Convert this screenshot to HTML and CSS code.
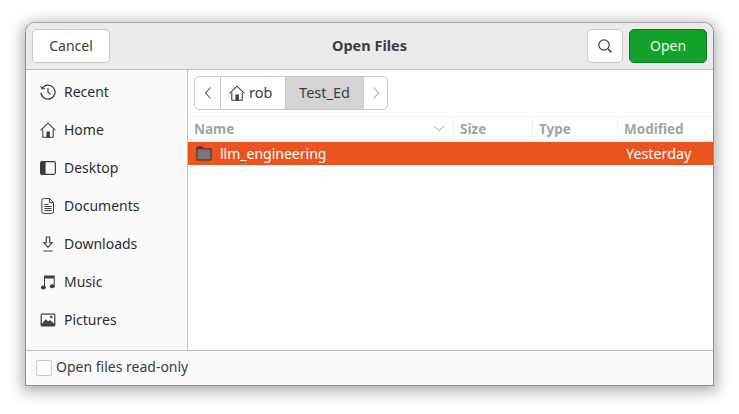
FILE: index.html
```html
<!DOCTYPE html>
<html>
    <head>
        <title>Open Files</title>
        <link rel="stylesheet" href="styles.css">
    </head>
    <body>
        <div class="window">
            <div class="header">
                <div class="header-left">
                    <button class="btn btn-cancel">Cancel</button>
                </div>
                <div class="title">Open Files</div>
                <div class="header-right">
                    <button class="btn btn-search">
                        <svg width="16" height="16" viewBox="0 0 16 16" fill="none" stroke="#3d3d3d">
                            <circle cx="7" cy="7" r="5.2" stroke-width="1.2"/>
                            <path d="M11 11l3.4 3.4" stroke-width="1.5"/>
                        </svg>
                    </button>
                    <button class="btn btn-open">Open</button>
                </div>
            </div>
            <div class="main">
                <div class="sidebar">
                    <div class="place">
                        <svg class="icon" viewBox="0 0 16 16" fill="none" stroke="#3d3d3d" stroke-width="1.2">
                            <path d="M2.2 4.2A7 7 0 1 1 1 8.6"/>
                            <path d="M0.8 1.8l1 3.2 3.2-.6" stroke-width="1"/>
                            <path d="M8 4v4.2l2.8 2.2"/>
                        </svg>
                        <span>Recent</span>
                    </div>
                    <div class="place">
                        <svg class="icon" viewBox="0 0 16 16" fill="none" stroke="#3d3d3d" stroke-width="1.1">
                            <path d="M.6 8.4L8 1.2l7.4 7.2"/>
                            <path d="M2.8 7.4v7.9h10.4V7.4"/>
                            <rect x="6.5" y="9.5" width="3.4" height="6" fill="#3d3d3d" stroke="none"/>
                        </svg>
                        <span>Home</span>
                    </div>
                    <div class="place">
                        <svg class="icon" viewBox="0 0 16 16" fill="none">
                            <rect x=".6" y="1.6" width="14.8" height="12.8" rx="1.8" stroke="#3d3d3d" stroke-width="1.2"/>
                            <path d="M2 1.5h3.6v13H2a1.6 1.6 0 0 1-1.5-1.6V3A1.6 1.6 0 0 1 2 1.5z" fill="#3d3d3d"/>
                        </svg>
                        <span>Desktop</span>
                    </div>
                    <div class="place">
                        <svg class="icon" viewBox="0 0 16 16" fill="none" stroke="#3d3d3d" stroke-width="1">
                            <path d="M3.5.6h6.2l3.8 3.8v9.4a1.6 1.6 0 0 1-1.6 1.6H3.5a1.6 1.6 0 0 1-1.6-1.6V2.2A1.6 1.6 0 0 1 3.5.6z"/>
                            <path d="M9.5.8v3.8h3.8"/>
                            <path d="M4.4 6.5h4M4.4 8.5h7.2M4.4 10.5h7.2M4.4 12.5h7.2"/>
                        </svg>
                        <span>Documents</span>
                    </div>
                    <div class="place">
                        <svg class="icon" viewBox="0 0 16 16" fill="none" stroke="#3d3d3d" stroke-width="1.1">
                            <path d="M6.3 1h3.4v5.8h2.4L8 11.2 3.9 6.8h2.4z"/>
                            <path d="M3.4 15h9.2"/>
                        </svg>
                        <span>Downloads</span>
                    </div>
                    <div class="place">
                        <svg class="icon" viewBox="0 0 16 16" fill="#3d3d3d">
                            <ellipse cx="3.4" cy="13.4" rx="2.5" ry="2"/>
                            <ellipse cx="12.2" cy="12.2" rx="2.5" ry="2"/>
                            <path d="M5 13.4h-1V1.6h10.7v10.6h-1V4.6H5z"/>
                        </svg>
                        <span>Music</span>
                    </div>
                    <div class="place">
                        <svg class="icon" viewBox="0 0 16 16">
                            <rect x=".6" y="1.5" width="14.8" height="13" rx="1.6" fill="#3d3d3d"/>
                            <rect x="1.8" y="2.7" width="12.4" height="8.4" fill="#fafafa"/>
                            <path d="M2.5 11.1l3.4-3.9 2.2 2.2 1.8-1.3 3.6 3z" fill="#3d3d3d"/>
                            <circle cx="11.2" cy="5" r="1.2" fill="#3d3d3d"/>
                        </svg>
                        <span>Pictures</span>
                    </div>
                </div>
                <div class="content">
                    <div class="pathbar">
                        <div class="seg seg-arrow">
                            <svg width="8" height="14" viewBox="0 0 8 14" fill="none" stroke="#555" stroke-width="1.1"><path d="M6.5 1.5L1.5 7l5 5.5"/></svg>
                        </div>
                        <div class="seg seg-home">
                            <svg class="icon" viewBox="0 0 16 16" fill="none" stroke="#3d3d3d" stroke-width="1.1">
                                <path d="M.6 8.4L8 1.2l7.4 7.2"/>
                                <path d="M2.8 7.4v7.9h10.4V7.4"/>
                                <rect x="6.5" y="9.5" width="3.4" height="6" fill="#3d3d3d" stroke="none"/>
                            </svg>
                            <span>rob</span>
                        </div>
                        <div class="seg seg-current">Test_Ed</div>
                        <div class="seg seg-next">
                            <svg width="8" height="14" viewBox="0 0 8 14" fill="none" stroke="#a8a8a8" stroke-width="1.1"><path d="M1.5 1.5l5 5.5-5 5.5"/></svg>
                        </div>
                    </div>
                    <div class="cols">
                        <div class="col col-name">
                            <span>Name</span>
                            <svg width="12" height="7" viewBox="0 0 12 7" fill="none" stroke="#a8a8a8" stroke-width="1"><path d="M1 1l5 5 5-5"/></svg>
                        </div>
                        <div class="col col-size">Size</div>
                        <div class="col col-type">Type</div>
                        <div class="col col-mod">Modified</div>
                    </div>
                    <div class="row">
                        <div class="row-name">
                            <svg class="folder" viewBox="0 0 16 15">
                                <path d="M2 .5h4.5L8 2h6a1.6 1.6 0 0 1 1.6 1.6v9.4a1.6 1.6 0 0 1-1.6 1.6H2A1.6 1.6 0 0 1 .4 13V2.1A1.6 1.6 0 0 1 2 .5z" fill="#3b3230"/>
                                <path d="M1.4 2h13.2v1.6H1.4z" fill="#9a3040"/>
                                <rect x="1.4" y="3.6" width="13.2" height="10" rx=".8" fill="#7a7674"/>
                            </svg>
                            <span>llm_engineering</span>
                        </div>
                        <div class="row-mod">Yesterday</div>
                    </div>
                </div>
            </div>
            <div class="footer">
                <span class="check"></span>
                <span>Open files read-only</span>
            </div>
        </div>
    </body>
</html>
```

FILE: styles.css
```css
* {
    box-sizing: border-box;
}

body {
    margin: 0;
    padding: 22px 25px;
    background: white;
    font-family: "Noto Sans", sans-serif;
    font-size: 14px;
    line-height: 18px;
    color: #2d2d2d;
}

.window {
    width: 689px;
    height: 364px;
    display: flex;
    flex-direction: column;
    background: #fafafa;
    border: 1px solid #8f8f8f;
    border-top-color: #a8a8a8;
    border-radius: 10px 10px 0 0;
    box-shadow: 0 3px 14px 3px rgba(0, 0, 0, 0.3);
    overflow: hidden;
}

/* header */
.header {
    height: 47px;
    flex: none;
    display: grid;
    grid-template-columns: 1fr auto 1fr;
    align-items: center;
    padding: 0 6px;
    background: #ebebeb;
    border-bottom: 1px solid #bfbfbf;
}

.header-left {
    display: flex;
}

.header-right {
    display: flex;
    justify-content: flex-end;
    gap: 6px;
}

.title {
    font-weight: bold;
    font-size: 14.5px;
    color: #3d3d3d;
    padding-bottom: 2px;
}

.btn {
    height: 34px;
    padding: 0 0 2px 0;
    font-family: inherit;
    font-size: 14px;
    color: #3d3d3d;
    background: white;
    border: 1px solid #cdc7c2;
    border-radius: 5px;
    display: flex;
    align-items: center;
    justify-content: center;
}

.btn-cancel {
    width: 78px;
}

.btn-search {
    width: 36px;
    padding: 0;
}

.btn-open {
    width: 78px;
    color: #e8fbe8;
    background: #12a12b;
    border-color: #0c7a1f;
}

/* sidebar */
.main {
    flex: 1;
    display: flex;
    min-height: 0;
}

.sidebar {
    width: 162px;
    flex: none;
    padding-top: 3px;
    border-right: 1px solid #bfbfbf;
}

.place {
    height: 38px;
    display: flex;
    align-items: center;
    gap: 8px;
    padding-left: 14px;
}

.icon {
    width: 16px;
    height: 16px;
    flex: none;
}

/* file list */
.content {
    flex: 1;
    background: white;
}

.pathbar {
    display: flex;
    width: 194px;
    height: 34px;
    margin: 6px 0 0 6px;
    border: 1px solid #cdc7c2;
    border-radius: 5px;
    overflow: hidden;
}

.seg {
    display: flex;
    align-items: center;
    justify-content: center;
    color: #3d3d3d;
    border-right: 1px solid #cdc7c2;
}

.seg-arrow {
    width: 26px;
}

.seg-home {
    width: 65px;
    gap: 4px;
    justify-content: flex-start;
    padding-left: 8px;
}

.seg-home span {
    font-size: 14.5px;
    padding-bottom: 2px;
}

.seg-current {
    width: 78px;
    background: #d4d4d4;
    font-size: 14.5px;
    padding-bottom: 2px;
}

.seg-next {
    flex: 1;
    border-right: none;
}

.cols {
    display: flex;
    height: 26px;
    margin-top: 6px;
    border-top: 1px solid #f4f4f4;
    font-weight: bold;
    color: #a3a3a3;
    font-size: 13.5px;
}

.col {
    display: flex;
    align-items: center;
    padding-left: 6px;
    padding-bottom: 2px;
    border-right: 1px solid #f2f2f2;
}

.col-name {
    width: 266px;
    justify-content: space-between;
    padding-right: 8px;
}

.col-size {
    width: 79px;
}

.col-type {
    width: 85px;
}

.col-mod {
    flex: 1;
    border-right: none;
}

.row {
    height: 23px;
    display: flex;
    align-items: center;
    background: #e95420;
    color: white;
}

.row-name {
    width: 438px;
    display: flex;
    align-items: center;
    gap: 8px;
    padding-left: 8px;
}

.row-mod {
    font-size: 14.3px;
}

.folder {
    width: 16px;
    height: 15px;
    flex: none;
}

/* footer */
.footer {
    height: 35px;
    flex: none;
    display: flex;
    align-items: center;
    gap: 4px;
    padding-left: 10px;
    border-top: 1px solid #bfbfbf;
    color: #3d3d3d;
}

.footer span:last-child {
    padding-bottom: 2px;
}

.check {
    width: 16px;
    height: 16px;
    background: white;
    border: 1px solid #cdc7c2;
    border-radius: 3px;
}
```
